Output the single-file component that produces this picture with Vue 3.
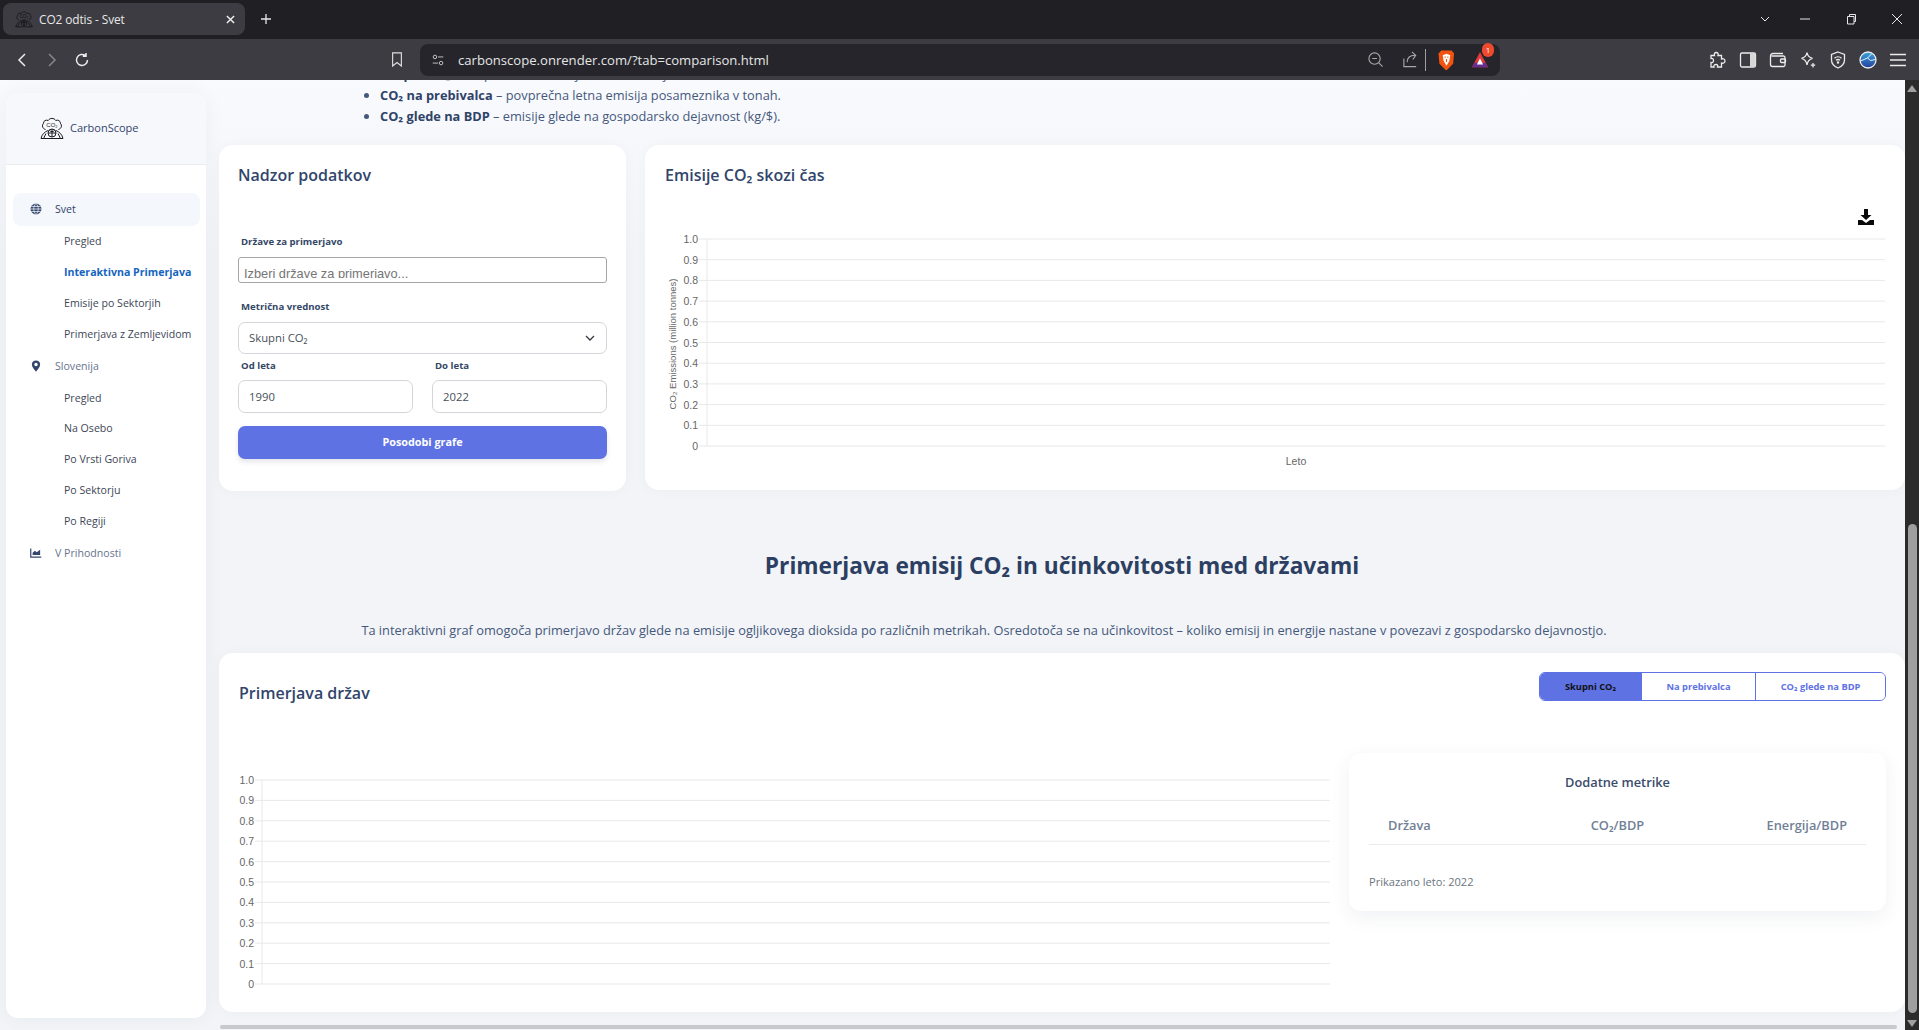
<template>
  <div class="page">
    <!-- browser chrome -->
    <div class="tabstrip">
      <div class="tab">
        <svg class="favicon" viewBox="0 0 24 24" v-html="logo"></svg>
        <span class="tab-title">CO2 odtis - Svet</span>
        <svg class="tab-close" viewBox="0 0 10 10"><path d="M1 1l8 8M9 1l-8 8" /></svg>
      </div>
      <svg class="tab-new" viewBox="0 0 12 12"><path d="M6 1v10M1 6h10" /></svg>
      <div class="win-btns">
        <svg viewBox="0 0 12 12"><path d="M2 4l4 4 4-4" /></svg>
        <svg viewBox="0 0 12 12"><path d="M1 6h10" /></svg>
        <svg viewBox="0 0 12 12"><path d="M2.5 3.5h6.5v7.5h-6.5zM4.5 3.5v-2h6v7h-1.500" /></svg>
        <svg viewBox="0 0 12 12"><path d="M1 1l10 10M11 1l-10 10" /></svg>
      </div>
    </div>
    <div class="toolbar">
      <div class="nav-btns">
        <svg viewBox="0 0 16 16"><path d="M11 2l-6 6 6 6" /></svg>
        <svg class="dim" viewBox="0 0 16 16"><path d="M5 2l6 6-6 6" /></svg>
        <svg viewBox="0 0 16 16"><path d="M13.500 8a5.500 5.500 0 1 1-2-4.300M12 1v3.200H8.800" /></svg>
      </div>
      <svg class="bookmark" viewBox="0 0 16 18"><path d="M3 1.500h10v15l-5-4-5 4z" /></svg>
      <div class="omnibox">
        <svg class="tune" viewBox="0 0 16 16"><circle cx="4.500" cy="4.500" r="2" /><path d="M8 4.500h6M2 11.500h6" /><circle cx="11.500" cy="11.500" r="2" /></svg>
        <span class="url">carbonscope.onrender.com/?tab=comparison.html</span>
        <svg class="omni-icon zoom-out" viewBox="0 0 18 18"><circle cx="8" cy="8" r="6" /><path d="M12.500 12.500l4 4M5.500 8h5" /></svg>
        <svg class="omni-icon share" viewBox="0 0 18 18"><path d="M2 8v8.500h13M5.500 12c0-5 3-7.500 8-7.500M10.500 1l4 3.500-3 4.500" /></svg>
        <span class="omni-sep"></span>
        <svg class="brave" viewBox="0 0 18 22">
          <path d="M3.500 1h11l2.500 3-1 11-6.500 6.500h-1.500l-6.500-6.500-1-11z" fill="#f1540f" />
          <path d="M5 6l4-1.500 4 1.500-1 6-3 5-3-5z" fill="#fff" />
          <path d="M7 8h1.200M9.800 8h1.200M9 10v3" stroke="#f1540f" stroke-width="1.200" fill="none" />
        </svg>
        <div class="bat">
          <svg viewBox="0 0 20 20">
            <path d="M10 1l9 17h-18z" fill="#e03a3a" />
            <path d="M1 18l3-5h12l3 5z" fill="#662d91" />
            <path d="M10 8l3.500 7h-7z" fill="#fff" />
          </svg>
          <span class="bat-count">1</span>
        </div>
      </div>
      <div class="ext-icons">
        <svg viewBox="0 0 18 18"><path d="M7 1.500c2 0 2.500 1.500 2 3h3.500v3.500c1.500-.6 3.500 0 3.500 2s-2 2.600-3.500 2v4h-4c.5-1.500 0-2.500-1.500-2.500s-2.500 1-2 2.500h-3v-4.500c1.500.4 2.500-.5 2.500-2s-1-2.400-2.500-2v-3h3.500c-.5-1.500 0-3 1.500-3z" /></svg>
        <svg viewBox="0 0 18 18"><rect x="1.500" y="2" width="15" height="14" rx="1.500" /><rect x="11" y="2" width="5.500" height="14" fill="#d8d8d8" stroke="none" /></svg>
        <svg viewBox="0 0 18 18"><path d="M14 2.500h-10c-1.500 0-2.500 1-2.500 2.500v8.500c0 1.200 1 2 2 2h11c1 0 1.500-.8 1.500-1.500v-7.500c0-1-.8-1.500-1.500-1.500h-12" /><rect x="11.500" y="8" width="5" height="3.500" rx="1" /></svg>
        <svg viewBox="0 0 18 18"><path d="M8 1.500c.6 3.500 2 5 5.500 5.800-3.500.8-4.900 2.700-5.500 6.700-.6-4-2-5.900-5.500-6.700 3.500-.8 4.900-2.300 5.500-5.800z" /><path d="M14 12v4.500M11.800 14.200h4.400" /></svg>
        <svg viewBox="0 0 18 18"><path d="M9 1l6.500 2.500v5.500c0 4-3 6.500-6.500 8-3.500-1.500-6.500-4-6.500-8v-5.500z" /><path d="M5.500 7.200c2-1.800 5-1.800 7 0M7 9.300c1.200-1 2.800-1 4 0" /><circle cx="9" cy="11.500" r=".6" /></svg>
        <svg class="globe-ext" viewBox="0 0 18 18">
          <defs><linearGradient id="ext" x1="0" y1="0" x2="0" y2="1"><stop offset="0" stop-color="#3aa3d8" /><stop offset="1" stop-color="#243f9f" /></linearGradient></defs>
          <circle cx="9" cy="9" r="8" fill="url(#ext)" />
          <path d="M1.500 10l7-3 3 2.500 5-1M8.500 7l4-4" stroke="#e8f4fa" stroke-width="1" fill="none" />
        </svg>
        <svg viewBox="0 0 18 18"><path d="M1 3.500h16M1 9h16M1 14.500h16" /></svg>
      </div>
    </div>

    <!-- page -->
    <div class="viewport">
      <aside class="sidebar">
        <div class="brand">
          <svg class="brand-logo" viewBox="0 0 24 24" v-html="logo"></svg>
          <span>CarbonScope</span>
        </div>
        <nav class="menu">
          <template v-for="group in menu" :key="group.name">
            <div class="menu-group" :class="{ open: group.open }">
              <svg class="menu-icon" viewBox="0 0 16 16" v-html="group.icon"></svg>
              <span>{{ group.name }}</span>
            </div>
            <a
              v-for="item in group.items"
              :key="item"
              class="menu-item"
              :class="{ active: item === 'Interaktivna Primerjava' }"
            >{{ item }}</a>
          </template>
        </nav>
      </aside>

      <main class="main">
        <ul class="intro">
          <li><b>Skupni CO₂</b> – skupne letne emisije države v milijonih ton.</li>
          <li><b>CO₂ na prebivalca</b> – povprečna letna emisija posameznika v tonah.</li>
          <li><b>CO₂ glede na BDP</b> – emisije glede na gospodarsko dejavnost (kg/$).</li>
        </ul>

        <div class="top-row">
          <section class="card controls">
            <h3>Nadzor podatkov</h3>
            <label class="first">Države za primerjavo</label>
            <div class="multi"><div class="multi-clip">Izberi države za primerjavo...</div></div>
            <label class="second">Metrična vrednost</label>
            <div class="field select">
              <span>Skupni CO₂</span>
              <svg viewBox="0 0 12 12"><path d="M2 4l4 4 4-4" /></svg>
            </div>
            <div class="years">
              <div>
                <label>Od leta</label>
                <div class="field">1990</div>
              </div>
              <div>
                <label>Do leta</label>
                <div class="field">2022</div>
              </div>
            </div>
            <button class="update">Posodobi grafe</button>
          </section>

          <section class="card timeline">
            <h3>Emisije CO₂ skozi čas</h3>
            <svg class="download" viewBox="0 0 16 16">
              <path d="M6 0h4v6h3.500l-5.500 5-5.500-5h3.500z" />
              <path d="M0 11h4l4 3 4-3h4v5h-16z" />
            </svg>
            <svg class="chart" width="1260" height="260">
              <text class="axis-title" transform="translate(31 125) rotate(-90)" text-anchor="middle">CO₂ Emissions (million tonnes)</text>
              <line class="grid" x1="62" x2="62" :y1="20" :y2="227" />
              <g v-for="(t, i) in ticks" :key="t">
                <line class="grid" x1="54" x2="1240" :y1="20 + i * 20.7" :y2="20 + i * 20.7" />
                <text class="tick" x="53" :y="24 + i * 20.7" text-anchor="end">{{ t }}</text>
              </g>
              <text class="tick" x="651" y="246" text-anchor="middle">Leto</text>
            </svg>
          </section>
        </div>

        <h2 class="heading">Primerjava emisij CO₂ in učinkovitosti med državami</h2>
        <p class="lead">Ta interaktivni graf omogoča primerjavo držav glede na emisije ogljikovega dioksida po različnih metrikah. Osredotoča se na učinkovitost – koliko emisij in energije nastane v povezavi z gospodarsko dejavnostjo.</p>

        <section class="card compare">
          <div class="compare-head">
            <h3>Primerjava držav</h3>
            <div class="tabs">
              <button v-for="(t, i) in metricTabs" :key="t" :class="{ on: i === 0 }">{{ t }}</button>
            </div>
          </div>
          <div class="compare-body">
            <svg class="chart" width="1091" height="225">
              <line class="grid" x1="23" x2="23" y1="14" y2="218" />
              <g v-for="(t, i) in ticks" :key="t">
                <line class="grid" x1="16" x2="1091" :y1="14 + i * 20.4" :y2="14 + i * 20.4" />
                <text class="tick" x="15" :y="18 + i * 20.4" text-anchor="end">{{ t }}</text>
              </g>
            </svg>
            <div class="metrics">
              <h4>Dodatne metrike</h4>
              <div class="metrics-head">
                <span>Država</span>
                <span>CO₂/BDP</span>
                <span>Energija/BDP</span>
              </div>
              <p class="shown">Prikazano leto: 2022</p>
            </div>
          </div>
        </section>
        <div class="hscroll"></div>
      </main>

      <div class="vscroll">
        <span class="arrow up"></span>
        <span class="thumb"></span>
        <span class="arrow down"></span>
      </div>
    </div>
  </div>
</template>

<script setup>
const ticks = ['1.0', '0.9', '0.8', '0.7', '0.6', '0.5', '0.4', '0.3', '0.2', '0.1', '0']

const metricTabs = ['Skupni CO₂', 'Na prebivalca', 'CO₂ glede na BDP']

// cloud over a globe held by two hands
const logo = `<g fill="none" stroke="currentColor" stroke-width="1">
  <path d="M5.500 13.500c-3-.8-4-4-2-6.200-.3-2.600 2.700-3.800 4.700-2.800 1.500-2.800 6-2.800 7.500 0 2-1 5 .2 4.700 2.800 2 2.200 1 5.400-2 6.200"/>
  <circle cx="12" cy="17" r="4"/>
  <path d="M8 17h8M12 13v8M9.500 14.500c1.500 1.500 3.500 1.500 5 0"/>
  <path d="M1 22.500c.8-4 3.500-6.500 7-8M23 22.500c-.8-4-3.500-6.500-7-8M1 22.500h22M6 17.500l-2.500 5M18 17.500l2.500 5"/>
</g>
<text x="12" y="10.500" text-anchor="middle" font-size="6" font-family="Liberation Sans, sans-serif" fill="currentColor">CO₂</text>`

const globeIcon = '<circle cx="8" cy="8" r="7.300" fill="currentColor"/><path d="M.7 8h14.600M1.700 4.600h12.600M1.700 11.400h12.600M8 .7c-4 4-4 10.600 0 14.600M8 .7c4 4 4 10.600 0 14.600" stroke="#f4f7fb" stroke-width="1" fill="none"/>'
const pinIcon = '<path fill-rule="evenodd" d="M8 .5a5.500 5.500 0 0 1 5.500 5.500c0 3.300-3.300 7-5.500 9.500-2.200-2.500-5.500-6.200-5.500-9.500a5.500 5.500 0 0 1 5.500-5.500zm0 3.200a2.300 2.300 0 1 0 0 4.600 2.300 2.300 0 0 0 0-4.600z" fill="currentColor"/>'
const chartIcon = '<path d="M1 2v11.500h14" stroke="currentColor" stroke-width="1.600" fill="none"/><path d="M3.500 10.500v-3l3-2.500 2.500 2 4.500-3.500v7z" fill="currentColor"/>'

const menu = [
  {
    name: 'Svet',
    icon: globeIcon,
    open: true,
    items: ['Pregled', 'Interaktivna Primerjava', 'Emisije po Sektorjih', 'Primerjava z Zemljevidom'],
  },
  {
    name: 'Slovenija',
    icon: pinIcon,
    items: ['Pregled', 'Na Osebo', 'Po Vrsti Goriva', 'Po Sektorju', 'Po Regiji'],
  },
  { name: 'V Prihodnosti', icon: chartIcon, items: [] },
]
</script>

<style>
html,
body {
  margin: 0;
  overflow: hidden;
}
</style>

<style scoped>
.page {
  width: 1919px;
  height: 1030px;
  display: flex;
  flex-direction: column;
  overflow: hidden;
  font-family: "Open Sans", "Noto Sans", sans-serif;
  color: #32456b;
}

/* browser chrome */
.tabstrip {
  height: 39px;
  flex: none;
  background: #1f1f24;
  display: flex;
  align-items: flex-start;
  color: #e8e8e8;
}
.tab {
  width: 242px;
  height: 32px;
  margin: 3px 0 0 3px;
  border-radius: 8px;
  background: #3c3c42;
  display: flex;
  align-items: center;
  padding: 0 10px 0 12px;
  box-sizing: border-box;
  gap: 6px;
  font-size: 11.900px;
}
.favicon {
  width: 18px;
  height: 18px;
  color: #111116;
}
.tab-title {
  flex: 1;
  letter-spacing: -0.1px;
}
.tab-close {
  width: 9px;
  height: 9px;
  fill: none;
  stroke: #f0f0f0;
  stroke-width: 1.600;
}
.tab-new {
  width: 12px;
  height: 12px;
  margin: 13px 0 0 15px;
  fill: none;
  stroke: #e8e8e8;
  stroke-width: 1.300;
}
.win-btns {
  margin-left: auto;
  display: flex;
  align-items: center;
  gap: 34px;
  margin-top: 13px;
  margin-right: 16px;
}
.win-btns svg {
  width: 12px;
  height: 12px;
  fill: none;
  stroke: #e8e8e8;
  stroke-width: 1;
}
.win-btns svg:first-child {
  margin-right: -6px;
}
.toolbar {
  height: 41px;
  flex: none;
  background: #3c3c42;
  display: flex;
  align-items: center;
  padding-left: 14px;
  box-sizing: border-box;
}
.nav-btns {
  display: flex;
  gap: 14px;
  width: 376px;
}
.nav-btns svg {
  width: 16px;
  height: 16px;
  fill: none;
  stroke: #ececec;
  stroke-width: 1.500;
}
.nav-btns svg.dim {
  stroke: #85858a;
}
.bookmark {
  width: 14px;
  height: 17px;
  fill: none;
  stroke: #e0e0e0;
  stroke-width: 1.300;
  margin-right: 16px;
}
.omnibox {
  width: 1080px;
  height: 32px;
  background: #25252b;
  border-radius: 8px;
  display: flex;
  align-items: center;
  padding: 0 11px 0 11px;
  box-sizing: border-box;
  color: #e6e6e6;
}
.tune {
  width: 14px;
  height: 14px;
  fill: none;
  stroke: #c6c6c6;
  stroke-width: 1.100;
  margin-right: 13px;
}
.url {
  font-size: 13.100px;
  flex: 1;
}
.omni-icon {
  width: 17px;
  height: 17px;
  fill: none;
  stroke: #a8a8a8;
  stroke-width: 1.200;
}
.share {
  margin-left: 18px;
}
.omni-sep {
  width: 1px;
  height: 22px;
  background: #a0a0a0;
  margin: 0 12px 0 6px;
}
.brave {
  width: 17px;
  height: 22px;
  margin-right: 16px;
}
.bat {
  position: relative;
  width: 18px;
  height: 18px;
}
.bat svg {
  width: 18px;
  height: 18px;
  display: block;
}
.bat-count {
  position: absolute;
  top: -8px;
  right: -5px;
  width: 12px;
  height: 14px;
  border-radius: 7px;
  background: #f04a2e;
  color: #fff;
  font-size: 8px;
  line-height: 14px;
  text-align: center;
}
.ext-icons {
  display: flex;
  align-items: center;
  gap: 12px;
  margin-left: 209px;
}
.ext-icons svg {
  width: 18px;
  height: 18px;
  fill: none;
  stroke: #ececec;
  stroke-width: 1.300;
}

/* page */
.viewport {
  flex: 1;
  min-height: 0;
  display: flex;
  background: linear-gradient(#f9fafd, #f2f4f7 18%);
  overflow: hidden;
}
.sidebar {
  flex: none;
  width: 200px;
  height: 925px;
  margin: 13px 13px 0 6px;
  background: #fff;
  border-radius: 12px;
  box-shadow: 0 0 20px rgba(40, 50, 90, 0.05);
  overflow: hidden;
}
.brand {
  height: 72px;
  background: #f7f8fb;
  border-bottom: 1px solid #eaebee;
  display: flex;
  align-items: center;
  padding: 0 0 2px 34px;
  gap: 6px;
  font-size: 11px;
  font-weight: 500;
  box-sizing: border-box;
}
.brand-logo {
  width: 24px;
  height: 24px;
  color: #1c1c22;
}
.menu {
  padding: 28px 6px 0 7px;
  font-size: 10.600px;
}
.menu-group {
  height: 33px;
  display: flex;
  align-items: center;
  padding: 0 0 1px 17px;
  box-sizing: border-box;
  gap: 13px;
  color: #67748e;
  border-radius: 8px;
}
.menu-group.open {
  background: #f4f7fb;
  color: #32456b;
}
.menu-icon {
  width: 12px;
  height: 12px;
  flex: none;
  color: #33466d;
}
.menu-item {
  display: block;
  height: 30.900px;
  line-height: 30.900px;
  padding-left: 51px;
  color: #3d4656;
  white-space: nowrap;
}
.menu-item.active {
  color: #1565c0;
  font-weight: 700;
}
.main {
  flex: none;
  width: 1686px;
  display: flex;
  flex-direction: column;
}
.intro {
  margin: -16px 0 0;
  padding: 0 0 0 161px;
  font-size: 12.800px;
  line-height: 21px;
  color: #45587c;
}
.intro b {
  color: #2f4368;
  font-weight: 700;
}
.top-row {
  margin-top: 18px;
  display: grid;
  grid-template-columns: 407px 1260px;
  gap: 19px;
}
.card {
  background: #fff;
  border-radius: 14px;
  box-shadow: 0 0 14px rgba(40, 50, 90, 0.03);
}
h3 {
  margin: 0;
  font-size: 16px;
  font-weight: 600;
  line-height: 24px;
  color: #32456b;
}
.controls {
  height: 346px;
  padding: 18px 19px 0;
  box-sizing: border-box;
}
.controls label {
  display: block;
  font-size: 9.600px;
  font-weight: 700;
  line-height: 14px;
  padding-left: 3px;
  color: #344767;
}
.controls label.first {
  margin-top: 48px;
}
.controls label.second {
  margin-top: 17px;
  margin-bottom: 8px;
}
.multi {
  margin-top: 8px;
  height: 26px;
  border: 1px solid #a6a6a6;
  border-radius: 3px;
  padding: 4px 5px 0;
  box-sizing: border-box;
  background: #fff;
}
/* the placeholder's descenders are cut off in the original */
.multi-clip {
  height: 16px;
  overflow: hidden;
  font: 12.800px/24px "Liberation Sans", Arial, sans-serif;
  color: #757575;
}
.field {
  height: 33px;
  border: 1px solid #d2d6da;
  border-radius: 7px;
  box-sizing: border-box;
  padding: 0 10px;
  display: flex;
  align-items: center;
  font-size: 11.300px;
  color: #495057;
}
.select {
  height: 32px;
  padding-bottom: 1px;
  justify-content: space-between;
}
.select svg {
  width: 12px;
  height: 12px;
  fill: none;
  stroke: #343a40;
  stroke-width: 1.300;
}
.years {
  display: grid;
  grid-template-columns: 175px 175px;
  gap: 19px;
  margin-top: 5px;
}
.years label {
  margin-bottom: 7px;
}
.update {
  display: block;
  width: 100%;
  height: 33px;
  margin-top: 13px;
  padding: 0 0 2px;
  border: 0;
  border-radius: 7px;
  background: #5e72e4;
  color: #fff;
  font: 700 10.800px "Open Sans", sans-serif;
  box-shadow: 0 3px 5px rgba(50, 50, 93, 0.12);
}
.timeline {
  position: relative;
  height: 345px;
  padding: 18px 0 0 20px;
  box-sizing: border-box;
}
.timeline .chart {
  margin: 32px 0 0 -20px;
}
.chart {
  display: block;
}
.grid {
  stroke: #e8e8e8;
  stroke-width: 1;
}
.tick {
  font: 10.500px "Liberation Sans", Arial, sans-serif;
  fill: #666;
}
.axis-title {
  font: 9.500px "Liberation Sans", Arial, sans-serif;
  fill: #666;
}
.download {
  position: absolute;
  right: 31px;
  top: 64px;
  width: 16px;
  height: 16px;
  fill: #0a0a0a;
}
.heading {
  margin: 59px 0 0;
  text-align: center;
  font-size: 22.700px;
  line-height: 32px;
  font-weight: 700;
  color: #2c3f63;
}
.lead {
  margin: 38px 0 0;
  padding-right: 156px;
  text-align: center;
  font-size: 12.800px;
  line-height: 20px;
  color: #45587c;
}
.compare {
  margin-top: 13px;
  height: 359px;
  padding: 19px 19px 0 20px;
  box-sizing: border-box;
}
.compare-head {
  display: flex;
  justify-content: space-between;
  align-items: flex-start;
}
.compare-head h3 {
  margin-top: 9px;
}
.tabs {
  display: flex;
  height: 29px;
  box-sizing: border-box;
  border: 1px solid #5e72e4;
  border-radius: 6px;
  overflow: hidden;
}
.tabs button {
  border: 0;
  border-left: 1px solid #5e72e4;
  background: #fff;
  color: #5e72e4;
  font: 700 9.300px "Open Sans", sans-serif;
  width: 114px;
  padding: 0;
}
.tabs button:first-child {
  border-left: 0;
}
.tabs button:last-child {
  width: 130px;
}
.tabs button.on {
  width: 101px;
  background: #5e72e4;
  color: #111;
}
.compare-body {
  display: flex;
  justify-content: space-between;
  align-items: flex-start;
  margin-top: 48px;
}
.compare-body .chart {
  margin-top: 13px;
}
.metrics {
  width: 537px;
  height: 158px;
  border-radius: 12px;
  background: #fff;
  box-shadow: 0 6px 20px rgba(40, 50, 90, 0.07);
  padding: 20px 20px 0;
  box-sizing: border-box;
}
.metrics h4 {
  margin: 0;
  font-size: 12.800px;
  line-height: 18px;
  font-weight: 600;
  text-align: center;
  color: #3b4b6c;
}
.metrics-head {
  display: grid;
  grid-template-columns: 1fr 1fr 1fr;
  font-size: 12.800px;
  font-weight: 600;
  color: #718096;
  height: 40px;
  line-height: 40px;
  margin-top: 14px;
  box-sizing: border-box;
  border-bottom: 1px solid #e9ecef;
  padding: 0 19px;
}
.metrics-head span:nth-child(2) {
  text-align: center;
}
.metrics-head span:nth-child(3) {
  text-align: right;
}
.shown {
  margin: 29px 0 0;
  font-size: 11.100px;
  line-height: 16px;
  color: #6c757d;
}
.hscroll {
  width: 1677px;
  height: 4px;
  margin: 13px 0 0 1px;
  background: #c8c9cc;
  border-radius: 2px;
}
.vscroll {
  flex: none;
  width: 14px;
  background: #2b2b2b;
  position: relative;
}
.arrow {
  position: absolute;
  left: 2px;
  width: 0;
  height: 0;
  border-left: 5px solid transparent;
  border-right: 5px solid transparent;
}
.arrow.up {
  top: 5px;
  border-bottom: 7px solid #a0a0a0;
}
.arrow.down {
  bottom: 3px;
  border-top: 7px solid #a0a0a0;
}
.thumb {
  position: absolute;
  left: 3px;
  right: 2px;
  top: 444px;
  bottom: 17px;
  background: #9f9f9f;
  border-radius: 5px;
}
</style>
